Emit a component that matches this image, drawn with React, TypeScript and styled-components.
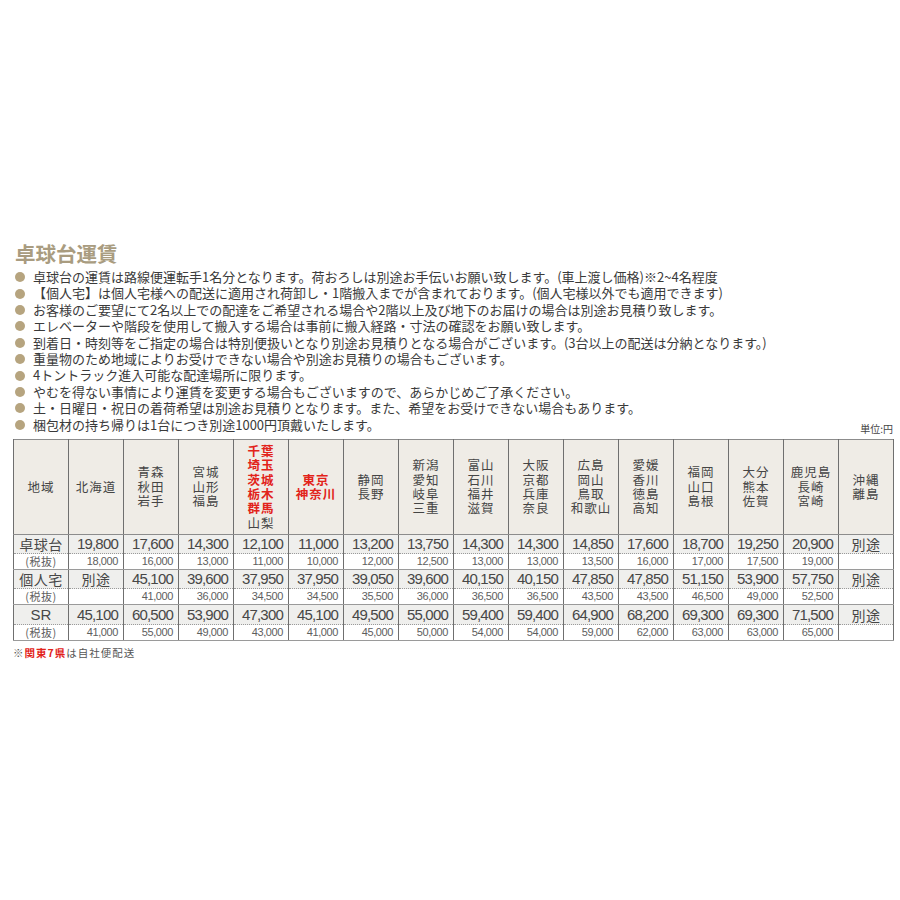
import React from "react";
import styled, { createGlobalStyle } from "styled-components";

const Global = createGlobalStyle`
  html, body { margin: 0; padding: 0; background: #fff; }
  body {
    font-family: "Noto Sans CJK JP", "Liberation Sans", sans-serif;
    color: #3a3a3a;
  }
`;

const JP = `"Noto Sans CJK JP", sans-serif`;
const NUM = `"Liberation Sans", "Noto Sans CJK JP", sans-serif`;

const Page = styled.div`
  width: 900px;
  height: 900px;
  box-sizing: border-box;
  padding: 241px 7px 0 13px;
`;

const Title = styled.h2`
  margin: 0 0 4px 2px;
  font-family: ${JP};
  font-size: 20.5px;
  line-height: 24px;
  font-weight: 700;
  color: #a99c80;
`;

const NotesRow = styled.div`
  display: flex;
  justify-content: space-between;
  align-items: flex-end;
`;

const List = styled.ul`
  list-style: none;
  margin: 0;
  padding: 0;
`;

const Item = styled.li`
  display: flex;
  align-items: center;
  gap: 8px;
  margin-left: 2px;
  font-family: ${JP};
  font-size: 13px;
  line-height: 16.4px;
  color: #3a3a3a;
  white-space: nowrap;
  &::before {
    content: "";
    width: 10px;
    height: 10px;
    border-radius: 50%;
    background: #b6a47f;
    flex: none;
  }
`;

const Unit = styled.div`
  font-family: ${JP};
  font-size: 10px;
  line-height: 12px;
  color: #444;
  margin-bottom: -2px;
`;

const Table = styled.table`
  width: 880px;
  margin-top: 6px;
  border-collapse: collapse;
  table-layout: fixed;
  border: 1px solid #8c8c8c;
`;

const HeadCell = styled.th`
  height: 94px;
  padding: 0;
  background: #efece6;
  border-left: 1px solid #6f6f6f;
  border-right: 1px solid #6f6f6f;
  border-bottom: 1px solid #8c8c8c;
  font-family: ${JP};
  font-weight: 400;
  font-size: 12.5px;
  letter-spacing: 1px;
  color: #454545;
  text-align: center;
  vertical-align: middle;
`;

const HeadLine = styled.div`
  line-height: 14.4px;
  height: 14.4px;
`;

const Red = styled.span`
  color: #e2231a;
  font-weight: 700;
`;

const MainCell = styled.td<{ $label?: boolean; $center?: boolean }>`
  height: 18px;
  padding: 0 5px 0 0;
  background: #efefed;
  border-left: 1px solid #6f6f6f;
  border-right: 1px solid #6f6f6f;
  border-bottom: 1px dotted #9a9a9a;
  font-family: ${(p) => (p.$label || p.$center ? JP : NUM)};
  font-size: ${(p) => (p.$label || p.$center ? "14px" : "15px")};
  letter-spacing: ${(p) => (p.$label || p.$center ? "0.5px" : "-0.8px")};
  line-height: 18px;
  color: #474747;
  text-align: ${(p) => (p.$label || p.$center ? "center" : "right")};
  ${(p) => (p.$label || p.$center ? "padding: 0;" : "")}
  white-space: nowrap;
`;

const SubCell = styled.td<{ $label?: boolean }>`
  height: 15px;
  padding: ${(p) => (p.$label ? "0" : "0 5px 0 0")};
  background: #fff;
  border-left: 1px solid #6f6f6f;
  border-right: 1px solid #6f6f6f;
  border-bottom: 1px solid #9a9a9a;
  font-family: ${(p) => (p.$label ? JP : NUM)};
  font-size: 11px;
  letter-spacing: ${(p) => (p.$label ? "0.5px" : "-0.4px")};
  line-height: 15px;
  color: #5e5e5e;
  text-align: ${(p) => (p.$label ? "center" : "right")};
  white-space: nowrap;
`;

const Footnote = styled.div`
  margin-top: 6px;
  font-family: ${JP};
  font-size: 10.5px;
  line-height: 12px;
  letter-spacing: 1px;
  color: #555;
`;

const FootRed = styled.span`
  color: #e2231a;
  font-weight: 700;
`;

const notes = [
  "卓球台の運賃は路線便運転手1名分となります。荷おろしは別途お手伝いお願い致します。(車上渡し価格)※2~4名程度",
  "【個人宅】は個人宅様への配送に適用され荷卸し・1階搬入までが含まれております。(個人宅様以外でも適用できます)",
  "お客様のご要望にて2名以上での配達をご希望される場合や2階以上及び地下のお届けの場合は別途お見積り致します。",
  "エレベーターや階段を使用して搬入する場合は事前に搬入経路・寸法の確認をお願い致します。",
  "到着日・時刻等をご指定の場合は特別便扱いとなり別途お見積りとなる場合がございます。(3台以上の配送は分納となります。)",
  "重量物のため地域によりお受けできない場合や別途お見積りの場合もございます。",
  "4トントラック進入可能な配達場所に限ります。",
  "やむを得ない事情により運賃を変更する場合もございますので、あらかじめご了承ください。",
  "土・日曜日・祝日の着荷希望は別途お見積りとなります。また、希望をお受けできない場合もあります。",
  "梱包材の持ち帰りは1台につき別途1000円頂戴いたします。",
];

type Head = { lines: string[]; red?: number };
const heads: Head[] = [
  { lines: ["地域"] },
  { lines: ["北海道"] },
  { lines: ["青森", "秋田", "岩手"] },
  { lines: ["宮城", "山形", "福島"] },
  { lines: ["千葉", "埼玉", "茨城", "栃木", "群馬", "山梨"], red: 5 },
  { lines: ["東京", "神奈川"], red: 2 },
  { lines: ["静岡", "長野"] },
  { lines: ["新潟", "愛知", "岐阜", "三重"] },
  { lines: ["富山", "石川", "福井", "滋賀"] },
  { lines: ["大阪", "京都", "兵庫", "奈良"] },
  { lines: ["広島", "岡山", "鳥取", "和歌山"] },
  { lines: ["愛媛", "香川", "徳島", "高知"] },
  { lines: ["福岡", "山口", "島根"] },
  { lines: ["大分", "熊本", "佐賀"] },
  { lines: ["鹿児島", "長崎", "宮崎"] },
  { lines: ["沖縄", "離島"] },
];

type Group = { label: string; main: string[]; sub: string[] };
const groups: Group[] = [
  {
    label: "卓球台",
    main: ["19,800", "17,600", "14,300", "12,100", "11,000", "13,200", "13,750", "14,300", "14,300", "14,850", "17,600", "18,700", "19,250", "20,900", "別途"],
    sub: ["18,000", "16,000", "13,000", "11,000", "10,000", "12,000", "12,500", "13,000", "13,000", "13,500", "16,000", "17,000", "17,500", "19,000", ""],
  },
  {
    label: "個人宅",
    main: ["別途", "45,100", "39,600", "37,950", "37,950", "39,050", "39,600", "40,150", "40,150", "47,850", "47,850", "51,150", "53,900", "57,750", "別途"],
    sub: ["", "41,000", "36,000", "34,500", "34,500", "35,500", "36,000", "36,500", "36,500", "43,500", "43,500", "46,500", "49,000", "52,500", ""],
  },
  {
    label: "SR",
    main: ["45,100", "60,500", "53,900", "47,300", "45,100", "49,500", "55,000", "59,400", "59,400", "64,900", "68,200", "69,300", "69,300", "71,500", "別途"],
    sub: ["41,000", "55,000", "49,000", "43,000", "41,000", "45,000", "50,000", "54,000", "54,000", "59,000", "62,000", "63,000", "63,000", "65,000", ""],
  },
];

const SRLabel = styled.span`
  font-family: ${NUM};
  font-size: 15px;
  letter-spacing: 0;
`;

export default function App() {
  return (
    <>
      <Global />
      <Page>
        <Title>卓球台運賃</Title>
        <NotesRow>
          <List>
            {notes.map((n) => (
              <Item key={n}>{n}</Item>
            ))}
          </List>
          <Unit>単位:円</Unit>
        </NotesRow>
        <Table>
          <colgroup>
            {heads.map((_, i) => (
              <col key={i} style={{ width: 55 }} />
            ))}
          </colgroup>
          <thead>
            <tr>
              {heads.map((h, i) => (
                <HeadCell key={i}>
                  {h.lines.map((l, j) => (
                    <HeadLine key={j}>{h.red && j < h.red ? <Red>{l}</Red> : l}</HeadLine>
                  ))}
                </HeadCell>
              ))}
            </tr>
          </thead>
          <tbody>
            {groups.map((g) => (
              <React.Fragment key={g.label}>
                <tr>
                  <MainCell $label>{g.label === "SR" ? <SRLabel>SR</SRLabel> : g.label}</MainCell>
                  {g.main.map((v, i) => (
                    <MainCell key={i} $center={v === "別途"}>
                      {v}
                    </MainCell>
                  ))}
                </tr>
                <tr>
                  <SubCell $label>(税抜)</SubCell>
                  {g.sub.map((v, i) => (
                    <SubCell key={i}>{v}</SubCell>
                  ))}
                </tr>
              </React.Fragment>
            ))}
          </tbody>
        </Table>
        <Footnote>
          ※<FootRed>関東7県</FootRed>は自社便配送
        </Footnote>
      </Page>
    </>
  );
}
